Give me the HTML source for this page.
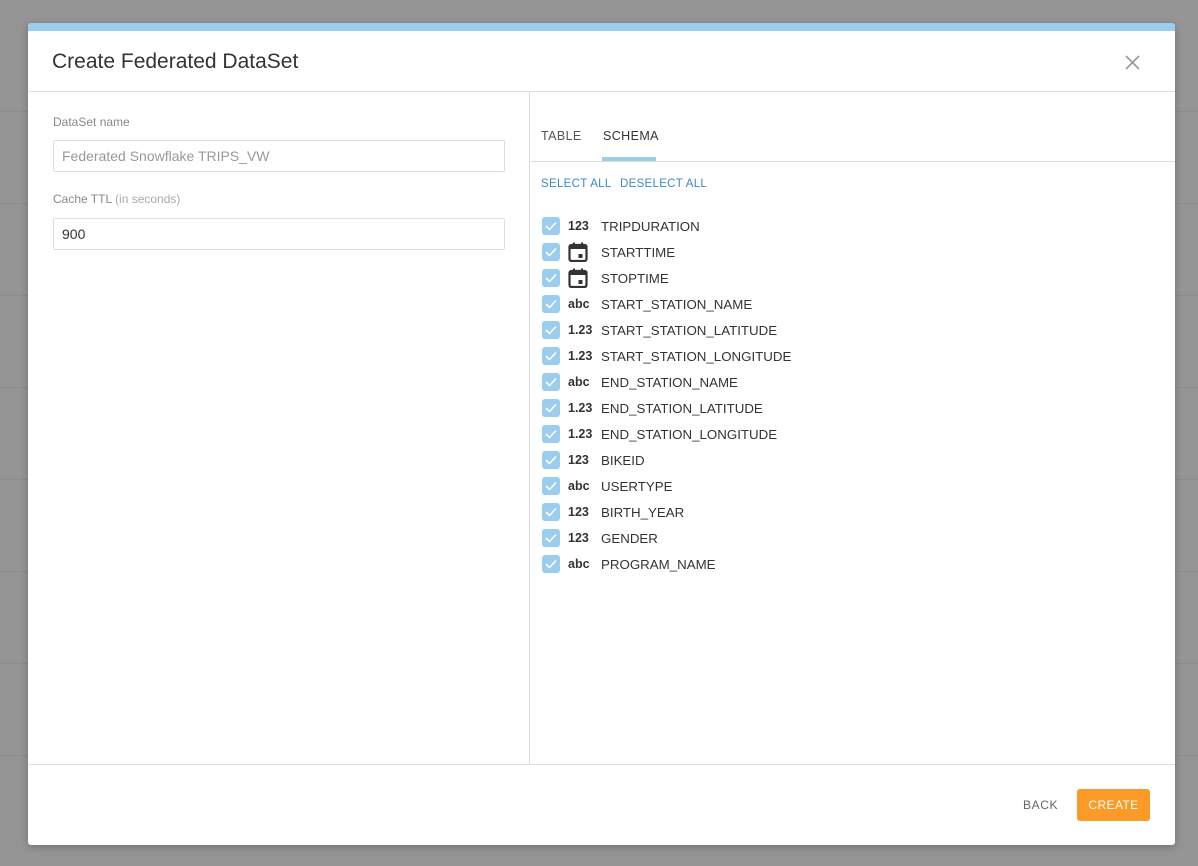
<!DOCTYPE html>
<html><head><style>
*{box-sizing:border-box;margin:0;padding:0}
body{width:1198px;height:866px;background:#959595;font-family:"Liberation Sans",sans-serif;position:relative;overflow:hidden}
.bgl{position:absolute;left:0;right:0;height:1px;background:#8c8c8c}
.modal{position:absolute;left:28px;top:23px;width:1147px;height:822px;background:#fff;border-radius:3px;overflow:hidden;box-shadow:0 2px 8px rgba(0,0,0,.25)}
.topbar{height:8px;background:#9bcdee}
.title{position:absolute;left:24px;top:27px;font-size:21px;color:#333}
.hl{position:absolute;left:0;right:0;height:1px;background:#ddd}
.vl{position:absolute;left:501px;top:69px;width:1px;height:672px;background:#ddd}
.lbl{position:absolute;left:25px;font-size:12px;color:#888}
.inp{position:absolute;left:25px;width:452px;height:32px;border:1px solid #ddd;border-radius:2px;padding:0 8px;line-height:30px;font-size:14px}
.tab{position:absolute;top:106px;font-size:12.5px;letter-spacing:.4px;color:#555}
.link{position:absolute;top:155px;font-size:11.5px;letter-spacing:.3px;color:#3a8ac4}
.row{position:absolute;left:514px;height:20px;display:flex;align-items:center}
.cb{width:18px;height:18px;background:#9bcdee;border-radius:3px;display:flex;align-items:center;justify-content:center}
.ic{width:33px;text-align:left;margin-left:8px;font-weight:bold;font-size:12.5px;color:#333;display:flex;align-items:center}
.nm{font-size:13.3px;color:#333}
.btn{position:absolute;font-size:12px;letter-spacing:.6px}
</style></head><body>
<div class="bgl" style="top:111px"></div><div class="bgl" style="top:203px"></div><div class="bgl" style="top:295px"></div><div class="bgl" style="top:387px"></div><div class="bgl" style="top:479px"></div><div class="bgl" style="top:571px"></div><div class="bgl" style="top:663px"></div><div class="bgl" style="top:755px"></div>
<div class="modal">
<div class="topbar"></div>
<div class="title">Create Federated DataSet</div>
<svg style="position:absolute;left:1097px;top:32px" width="15" height="15" viewBox="0 0 15 15"><path d="M1 1L14 14M14 1L1 14" stroke="#999" stroke-width="1.6"/></svg>
<div class="hl" style="top:68px"></div>
<div class="vl"></div>
<div class="hl" style="top:741px"></div>
<div class="lbl" style="top:92px">DataSet name</div>
<div class="inp" style="top:117px;color:#999">Federated Snowflake TRIPS_VW</div>
<div class="lbl" style="top:169px">Cache TTL <span style="color:#aaa">(in seconds)</span></div>
<div class="inp" style="top:195px;color:#333">900</div>
<div class="tab" style="left:513px">TABLE</div>
<div class="tab" style="left:575px;color:#333">SCHEMA</div>
<div style="position:absolute;left:574px;top:134px;width:54px;height:4px;background:#9bcdee"></div>
<div class="hl" style="left:502px;top:138px"></div>
<div class="link" style="left:513px">SELECT ALL</div>
<div class="link" style="left:592px">DESELECT ALL</div>
<div id="rows"></div>
<div class="btn" style="left:995px;top:775px;color:#666">BACK</div>
<div style="position:absolute;left:1049px;top:766px;width:73px;height:32px;background:#fb9a26;border-radius:3px;color:#fff;font-size:12px;letter-spacing:.4px;text-align:center;line-height:32px">CREATE</div>
</div>
<script>
var d=[["123","TRIPDURATION"],["cal","STARTTIME"],["cal","STOPTIME"],["abc","START_STATION_NAME"],["1.23","START_STATION_LATITUDE"],["1.23","START_STATION_LONGITUDE"],["abc","END_STATION_NAME"],["1.23","END_STATION_LATITUDE"],["1.23","END_STATION_LONGITUDE"],["123","BIKEID"],["abc","USERTYPE"],["123","BIRTH_YEAR"],["123","GENDER"],["abc","PROGRAM_NAME"]];
var h="";d.forEach(function(r,i){var ic=r[0]=="cal"?'<svg width="20" height="20" viewBox="0 0 20 20"><rect x="1.5" y="3" width="17" height="16" rx="2" fill="none" stroke="#333" stroke-width="2.2"/><rect x="1.5" y="3" width="17" height="4" fill="#333"/><rect x="5" y="0.5" width="2" height="4" fill="#333"/><rect x="13" y="0.5" width="2" height="4" fill="#333"/><rect x="10.5" y="12" width="4" height="4" fill="#333"/></svg>':r[0];
h+='<div class="row" style="top:'+(193+i*26)+'px"><div class="cb"><svg width="12" height="10" viewBox="0 0 12 10"><path d="M1 5l3.5 3.5L11 1.5" fill="none" stroke="#fff" stroke-width="1.6"/></svg></div><div class="ic">'+ic+'</div><div class="nm">'+r[1]+'</div></div>';});
document.getElementById("rows").outerHTML=h;
</script>
</body></html>
